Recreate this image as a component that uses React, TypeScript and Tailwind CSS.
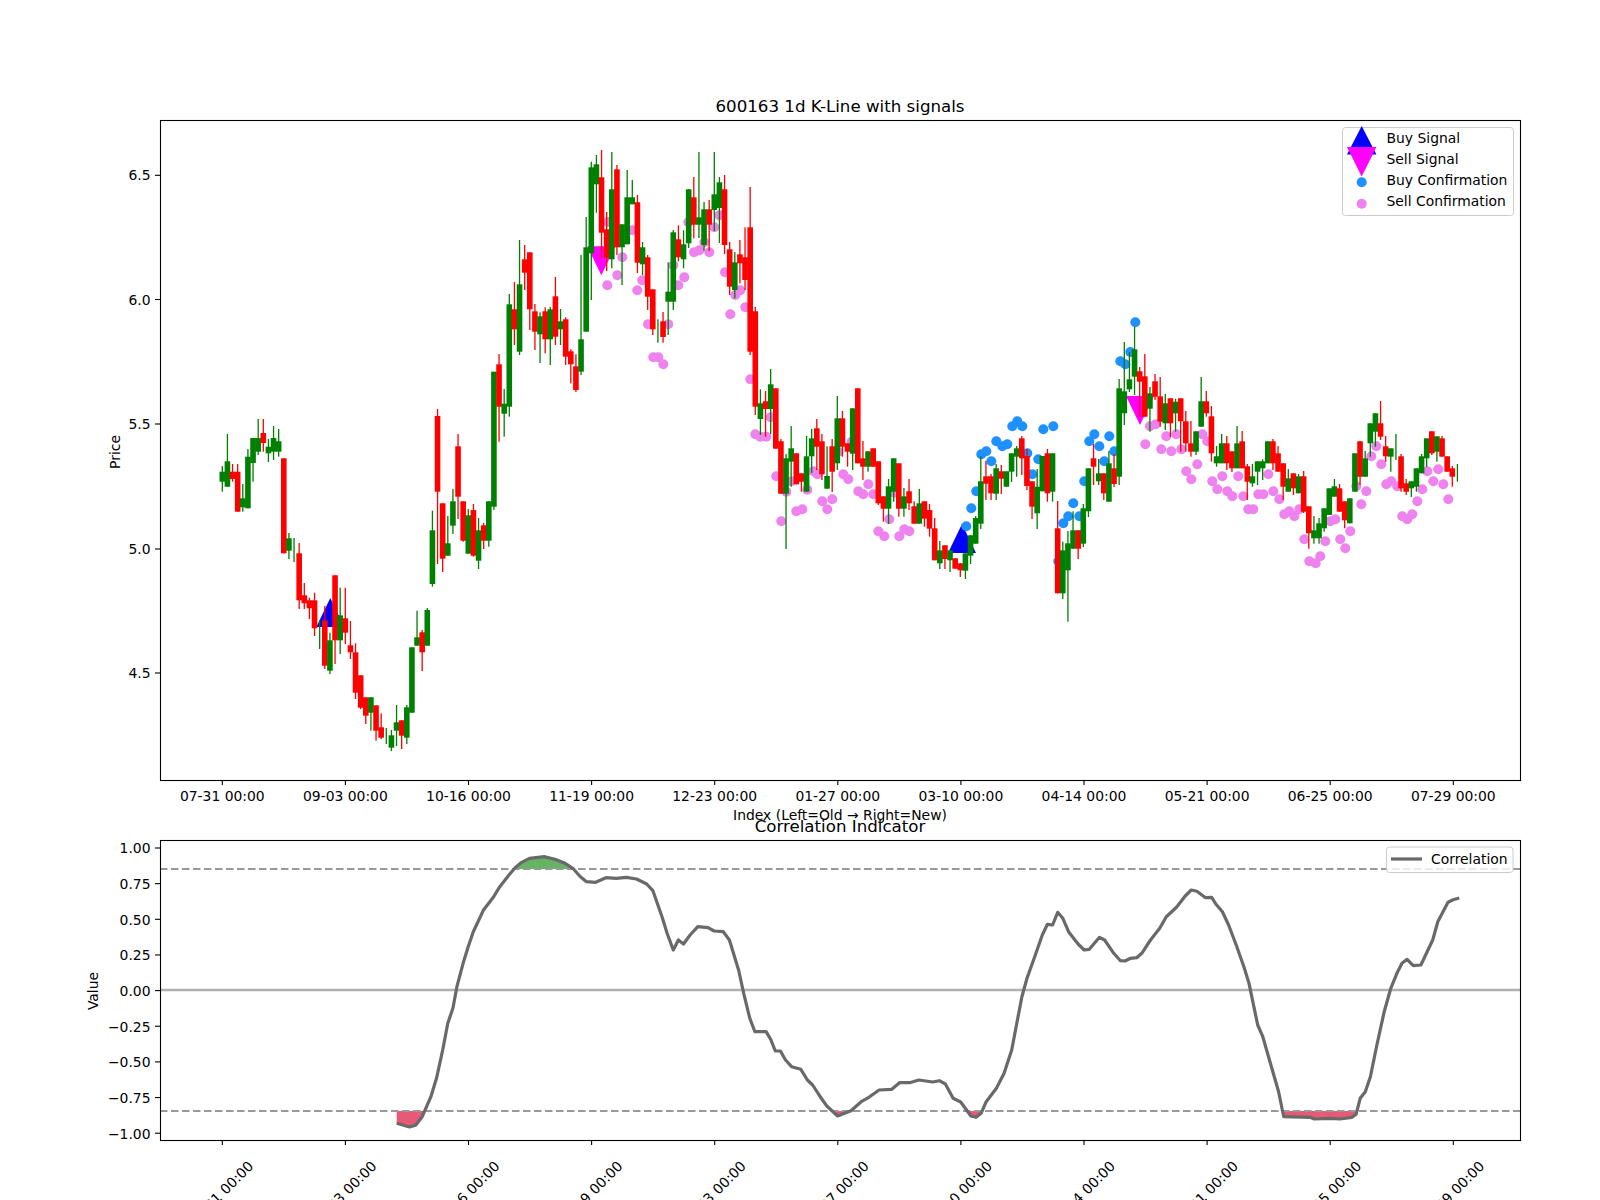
import React from "react";

type Candle = [string, number, number, number, number];
type Pt = [number, number];

// colour, body top, body bottom, wick top, wick bottom (pixels)
const candles: Candle[] = [
  ["g",471.7,481.7,466,491.7],["g",461.3,486.7,434,487],["r",471.7,479,464,481.7],["r",471.7,511.7,464,511.7],["g",498.3,507.3,484,511.7],
  ["g",456.7,508.3,449,508.3],["g",438,463,438,481.7],["g",438,451.7,419,455],["r",433,443,419,451.7],["g",446.7,453.3,439,462],
  ["g",438,451.7,426,460],["g",441.3,451.7,429,456.7],["r",458.3,553.3,458.3,553.3],["g",538.3,550.7,533,559],["g",550,550,538,562],
  ["r",553.3,600.3,543,609],["r",595.3,603.3,583,609],["r",600.3,608.3,597.7,619],["r",600.3,628.3,592.7,636],["g",630,630,620,649],
  ["r",620.3,665.7,606,669],["g",640.3,670.7,632.7,674],["r",575.3,640.3,575.3,664],["g",615.3,640.3,587.7,654],["r",618.3,632.7,587.7,644],
  ["r",645.3,652.3,621,659],["r",652.3,692.7,643.3,699],["r",675.3,707.7,675.3,709],["r",697.3,715.7,697.3,724],["g",697.3,712.7,697.3,730.7],
  ["r",705.3,730.7,705.3,740.7],["r",727.3,737.7,713.3,739],["g",736,736,728,744],["g",735.3,747.7,730,751],["g",722.3,730.7,705,746],
  ["r",720.3,735.7,720.3,749],["g",707.3,737.7,705,744],["g",647.3,712.7,647.3,712.7],["g",637.3,645.7,610.7,645.7],["r",632.3,652.3,630,671],
  ["g",610,645.7,608,645.7],["g",530.3,584,510.7,586.7],["r",416,491.7,409,564],["r",503.3,558.7,503.3,572],["g",543.3,555.7,516,555.7],
  ["g",501.3,525.7,489,534],["r",446.3,496.7,434,519],["r",501.3,540.7,501.3,541.7],["g",515.3,553.7,509,553.7],["r",510,555.7,504,556.7],
  ["g",530.3,560.7,518,569],["r",525.3,540.7,523,549],["g",501.3,540.7,501.3,546.7],["g",371.7,506.7,371.7,510],["r",364.3,406.7,354,441.7],
  ["g",403.7,413.7,389,436.7],["g",304.3,406.7,294,416.7],["r",309.3,329.3,282,345],["g",284.3,351.7,240,355],["r",259.3,272.7,245,290],
  ["r",252.3,309.3,252.3,330],["r",311.3,331.7,304,350],["g",316.3,334.3,312.3,363],["r",311.3,339.3,307.3,353.3],["g",309.3,339.3,307,365],
  ["r",296.3,336.7,277,345],["g",321.3,329.3,309,345],["r",319.3,356.7,317.3,365],["r",351.3,364.3,349.3,383.3],["r",366.3,390,354.3,392],
  ["g",339.3,371.7,255,375],["g",247.3,331.7,217,331.7],["g",167.3,253.3,161.7,300],["g",164.3,184.3,155,212.7],["r",177.3,232.7,150,258],
  ["r",229.3,257.7,212,271],["g",189.3,259.3,152,268.3],["r",169.3,247.3,165,255],["g",224.3,247.3,224.3,285],["g",197.3,244.3,170,244.3],
  ["g",197.3,204.3,180,204.3],["r",202.3,262.7,195,273],["g",247.3,264.3,242,275],["r",257.3,296.7,255,310],["r",289.3,329.3,289.3,335],
  ["g",330,330,319.3,342.7],["r",321.3,337,312,342.7],["g",291.7,301.7,262.3,335],["g",232.3,301.7,230,310],["r",239.3,257.3,225.3,261.3],
  ["g",244.3,259.3,230.3,268.3],["g",189.3,243.3,189.3,248],["r",197.3,224.7,177,238.3],["g",217.3,224.7,152,238],["g",209.3,245,202,250.7],
  ["r",209.3,224.7,200,251],["g",194.3,210,152,231],["g",182.3,208,177,243],["r",189.3,245,175,254],["r",249.3,286.7,242,295],
  ["g",262.3,290,252,298.3],["r",254.3,263.3,240,283.3],["r",257.3,280,227.3,290],["r",227.3,351.7,187,355],["r",311.3,406.7,307,415],
  ["g",403.3,419,389.3,435],["r",401.3,409,391,436.7],["g",384.3,409,369,434],["r",388.3,448.7,388.3,448.7],["r",441.3,493.7,439,493.7],
  ["g",458.3,493.7,454,549],["g",448.3,461.7,426,486.7],["r",453.3,484.3,453.3,484.3],["r",473.3,481.7,473.3,491.7],["g",456.3,491.7,436,491.7],
  ["g",438.3,456.3,429,473],["r",428.3,446.7,419,470],["r",441.3,474.3,434,480],["g",476,488.7,446.3,488.7],["r",446.3,471.7,439,492],
  ["g",418.3,463.3,396,470],["r",418.3,446.7,411,456.7],["r",443.3,451.7,443.3,466.7],["g",408.3,453.7,408.3,470],["r",388.3,463.3,388.3,463.3],
  ["r",458.3,466.7,441,480],["g",451.3,466.7,451.3,471.7],["r",448.3,466.7,448.3,466.7],["r",461.3,503.3,461.3,505],["r",496.3,508.7,496.3,521.7],
  ["g",486.3,508.7,479,524],["g",458.3,491.7,458.3,501.7],["r",463.3,508.7,463.3,516.7],["g",496.3,508.7,488,516.7],["r",491.3,503.3,479,510],
  ["r",506.3,523.7,501.3,523.7],["g",503.3,523.7,489,523.7],["r",501.3,518.7,501.3,526.7],["r",510,528.7,504,536.7],["r",528.3,560.3,518,560.3],
  ["g",550.3,563.3,541,569],["r",545.3,559,545.3,569],["g",550.3,560.3,550.3,572],["r",558.3,568.7,558.3,568.7],["r",563.3,570.3,563.3,577],
  ["g",553.3,570.7,553.3,579],["g",535.3,555.7,535.3,564],["g",518,543.7,516,543.7],["g",481.3,523.7,456,529],["r",476.3,483.7,461,500],
  ["r",476.3,493.3,474,500],["g",468.3,493.7,464,500],["r",471.3,478.7,465,494],["g",471.3,486.7,471.3,486.7],["g",453.3,471.7,453.3,482],
  ["g",448.3,456.7,446,476.7],["r",438.3,458.3,436,475],["r",456,486,449,490],["r",481.3,506.7,481.3,519],["g",486.7,513.3,469,529],
  ["g",456,491.3,456,491.3],["r",453.3,493.3,449,501.7],["g",453.3,491.7,453.3,501.7],["r",528.3,593.3,501,593.3],["g",550.3,593.3,541.7,599],
  ["g",543.3,570.3,531,621.7],["g",530.3,548.7,511.3,548.7],["r",530.3,548.7,530.3,559],["g",508.3,543.7,504,547],["g",468.3,511.3,468.3,517],
  ["r",458.3,466.7,444,485],["g",473.3,481.3,459,485],["r",473.3,493.3,473.3,500],["g",463.3,501.7,451,501.7],["r",468.3,484,454,487],
  ["g",388.3,476.7,379,485],["g",391.3,413.3,342,425],["g",379.3,389.3,352,392],["g",349.3,376.7,326.7,395],["r",371.3,381.7,367,416.7],
  ["r",376.3,416.7,354,416.7],["g",393.3,408.7,387,431.7],["r",381.3,396.7,374,400],["r",396.3,421.7,377,426.7],["g",403.3,423.3,394,430],
  ["r",398.3,423.3,398.3,437],["g",401.7,413.3,398.7,431.7],["r",398.3,421.3,398.3,451.7],["r",421.3,443.3,411,451.7],["r",443.3,451.7,421,456.7],
  ["g",431.3,451.7,431.3,455],["g",401.3,426.7,377,426.7],["r",401.3,413.3,391,416.7],["r",416.3,453.3,406,461.7],["g",456.3,463.3,446,466.7],
  ["g",443.3,463.3,434,463.3],["r",443.3,463.3,436,470],["r",451.3,468.3,451.3,472],["g",443.3,468.3,426,468.3],["r",441.3,468.3,431,468.3],
  ["r",466.3,481.7,464,500],["g",476.3,483.3,464,486.7],["g",461.3,471.7,461.3,485],["g",461.3,468.3,459.3,480],["g",441.3,463.3,441.3,463.3],
  ["r",441.3,463.3,439,470],["r",453.3,471.7,446,471.7],["r",463.3,486.7,463.3,500],["g",478.3,491.7,469,491.7],["r",473.3,488.3,473.3,495],
  ["g",476.3,493.3,474,493.3],["r",476.3,511.7,471,513],["r",506.3,533.3,506.3,548.7],["g",530.3,538.3,516,543.7],["g",523.3,538.3,518,543.7],
  ["g",508.3,528.3,508.3,531.7],["g",488.3,515,488.3,515],["g",486.3,496.7,479,496.7],["r",488.3,511.7,484,511.7],["r",501.3,520.3,501.3,528.3],
  ["g",498.3,523.3,498.3,523.3],["g",453.3,491.7,453.3,491.7],["r",441.3,476.7,441.3,485],["g",458.3,476.7,451,476.7],["g",423.3,443.3,423.3,456.7],
  ["g",413.3,431.7,413.3,446.7],["r",423.3,436.7,401,440],["r",446.3,456.3,436,461.7],["g",448.3,456.7,448.3,471.7],["g",447,447,434,460],
  ["r",456.3,488.3,454,491.7],["r",483.3,491.7,479,495],["g",481.3,488.3,481.3,497],["g",468.3,486.7,468.3,491.7],["g",456.3,473.3,454,473.3],
  ["g",438.3,458.3,438.3,467],["r",431.3,453.3,431.3,455],["g",436.3,451.7,436.3,461.7],["r",438.3,456.7,436,456.7],["r",456.3,471.7,456.3,471.7],
  ["r",468.3,476.7,466,486.7],["g",473,473,464,481.7],
];

const pinkDots: Pt[] = [
  [607.3,285.3],[617.3,275.3],[622.3,257.3],[637.3,290.3],[642.3,280.3],[632.3,230.3],[608,222],[648,324.3],[668.3,324.3],[653.3,357.3],
  [658.3,357.3],[663.3,364.3],[673.3,265.3],[678.3,285.3],[684.3,277.3],[688.3,222.3],[694,252.3],[699.3,250.3],[704.3,242.3],[709.3,252.3],
  [714.3,227.3],[719.3,215.3],[725,272.3],[730.3,314.3],[735.3,295],[740.3,290.3],[745.3,307.3],[750.3,379.3],[755.3,434.3],[760.3,436.7],
  [766.3,436.7],[770.7,417.3],[776.3,476.3],[781.3,521.3],[786.3,491.7],[791.3,481.3],[796.3,511.3],[802.3,509.3],[807.3,489.7],[813.3,471.3],
  [817.3,474.3],[822.3,501.3],[827.3,509.3],[832.3,499.3],[838.3,451.7],[843.3,474.3],[848.3,479.3],[851.7,441.7],[858.3,491.3],[863.3,494.3],
  [868.3,484.3],[873.3,494.3],[878.3,531.3],[884.3,536.3],[889.3,519.3],[894.3,492.7],[899.3,536.3],[904.3,529.3],[909.3,531.3],[1145.3,444.3],
  [1150,426.3],[1155.7,424.3],[1161.3,449.3],[1166.3,436.3],[1171.3,451.3],[1176.3,434.3],[1181.3,449.3],[1186.3,471.3],[1191.3,479.3],[1197.3,464.3],
  [1202.3,434.3],[1207.3,441.3],[1212.3,481.3],[1217.3,489.3],[1222.3,476.3],[1227.3,491.3],[1232.3,496.3],[1238.3,476.3],[1243.3,496.3],[1248.3,509.3],
  [1253.3,509.3],[1258.3,494.3],[1263.3,494.3],[1268.3,474.3],[1273.3,491.3],[1279.3,499.3],[1284.3,514.3],[1289.3,511.3],[1294.3,516.3],[1299.3,509.3],
  [1304.3,539.3],[1309.3,561.3],[1315.7,563.3],[1320.3,556.3],[1325.3,541.3],[1330.3,521.3],[1335.3,519.3],[1340.3,539.3],[1345.3,548.3],[1350.3,531.3],
  [1356.3,486.3],[1361.3,504.3],[1366.3,491.3],[1371.3,456.3],[1376.3,446.3],[1381.3,464.3],[1386.3,484.3],[1391.3,481.3],[1397.3,486.3],[1402.3,516.3],
  [1407.3,519.3],[1412.3,514.3],[1417.3,501.3],[1422.3,489.3],[1427.3,471.3],[1433.3,481.3],[1438.3,469.3],[1443.3,484.3],[1448.3,499.3],
];

const blueDots: Pt[] = [
  [966.3,526.3],[971.3,508.3],[976.3,491.3],[981.3,454.3],[986.3,451.3],[991.3,461.3],[996.3,441.3],[1002.3,446.3],[1007.3,444.3],[1012.3,426.3],
  [1017.3,421.3],[1022.3,426.3],[1027.3,453.3],[1032.3,474.3],[1038.3,459.3],[1043.3,429.3],[1053.3,426.3],[1058.3,561.3],[1063.3,523.3],[1068.3,516.3],
  [1073.3,503.3],[1079.3,516.3],[1084.3,481.3],[1089.3,441.3],[1094.3,434.3],[1099.3,446.3],[1104.3,461.3],[1109.3,436.3],[1114.3,451.3],[1120.3,361.3],
  [1125.3,364.3],[1130.3,352],[1135.3,322.3],
];

const corr: Pt[] = [
  [396.7,1123.3],[409.5,1127],[415.6,1125.3],[422.2,1116.7],[430.9,1096.7],[436.5,1078.3],[442.7,1050],[447.8,1023.3],[452.9,1008.3],[456.9,986.7],
  [463.1,963.3],[468.2,946.7],[473.3,931.7],[483.5,910],[493.7,896.7],[499.8,886.7],[509,875],[515.1,867.7],[521.7,862.3],[529.4,858.3],
  [544.7,856.7],[554.9,859.3],[565.1,863.3],[572.8,868.3],[580.4,876.7],[586.5,881.7],[595.7,882.3],[605.9,877.7],[616.1,878.3],[626.3,877.3],
  [636.5,879],[646.7,884],[652.9,890.7],[662,916.7],[667.1,933.3],[673.3,950],[678.4,940],[683.5,944],[690.1,935],[697.8,926.7],
  [708,927.7],[714.1,931],[723.3,931.7],[729.4,940],[738.6,970],[743.7,993.3],[749.8,1018.3],[754.9,1031.7],[766.1,1031.7],[770.7,1039.3],
  [775.3,1051],[780.4,1051],[785.5,1060],[791.6,1066.7],[800.8,1069.3],[807.4,1080],[812.6,1085],[820.2,1096.7],[826.8,1106],[837.6,1116],
  [851,1110.7],[861.2,1101.7],[868.9,1097.3],[879.1,1090],[891.8,1089.3],[899.5,1082.7],[909.7,1082.7],[918.9,1080],[932.7,1082],[939.3,1080.7],
  [945.4,1084],[953.1,1098.3],[960.7,1102],[970.9,1116],[976,1117.3],[981.1,1113.3],[986.2,1101.7],[996.4,1088.3],[1004.1,1073.3],[1011.7,1050],
  [1016.8,1023.3],[1021.9,996.7],[1027,978.3],[1034.7,956.7],[1042.3,935],[1047.4,924.3],[1052.6,925],[1057.7,912.3],[1062.8,918.3],[1068.9,932.3],
  [1078.1,944],[1084.2,950],[1089.3,949.3],[1099.5,937.3],[1104.6,940],[1113.8,953.3],[1120.4,960.7],[1125,961],[1130.6,958.3],[1136.7,957.7],
  [1141.8,953.3],[1150.5,940],[1159.7,928.3],[1166.3,916.7],[1176.5,907.3],[1185.2,896],[1191.3,890],[1196.9,891.3],[1205.6,897.7],[1211.7,897.3],
  [1215.8,904],[1222.4,911.7],[1228.6,925],[1236.2,945],[1243.9,966.7],[1249,983.3],[1257.7,1025],[1262.8,1036.7],[1270.4,1063.3],[1278.6,1091.7],
  [1283.7,1116.7],[1310.2,1117.3],[1314.3,1119],[1330.6,1118.3],[1339.8,1119],[1352,1117.3],[1356.1,1114.3],[1360.2,1098.3],[1365.3,1091.7],[1370.4,1076.7],
  [1376.5,1046.7],[1384.2,1011.7],[1390.8,988.3],[1396.9,973.3],[1402,963.3],[1407.1,959.3],[1413.3,965.7],[1420.9,965],[1432.7,940],[1437.8,921.7],
  [1448,902.3],[1453.1,899.7],[1459.2,898],
];

const dates = ["07-31 00:00","09-03 00:00","10-16 00:00","11-19 00:00","12-23 00:00","01-27 00:00","03-10 00:00","04-14 00:00","05-21 00:00","06-25 00:00","07-29 00:00"];
const tickX = (i: number) => 222.3 + 123.1 * i;
const priceTicks = [["6.5",175.3],["6.0",299.5],["5.5",424],["5.0",549],["4.5",673]] as const;
const corrTicks = ["1.00","0.75","0.50","0.25","0.00","−0.25","−0.50","−0.75","−1.00"];

const toPoints = (pts: Pt[]) => pts.map(([x, y]) => `${x},${y}`).join(" ");

// region between the curve and a threshold line, from x1 to x2
function area(x1: number, x2: number, y: number, keepBelow: boolean) {
  const inside = corr.filter(([x, v]) => x >= x1 && x <= x2 && (keepBelow ? v >= y : v <= y));
  return toPoints([[inside[0][0], y], ...inside, [inside[inside.length - 1][0], y]]);
}

function Triangle({ x, y, up, color }: { x: number; y: number; up: boolean; color: string }) {
  const d = up
    ? `${x},${y} ${x - 14},${y + 29} ${x + 14},${y + 29}`
    : `${x},${y} ${x - 14},${y - 29} ${x + 14},${y - 29}`;
  return <polygon points={d} fill={color} />;
}

function PriceChart() {
  return (
    <svg width={1600} height={830} viewBox="0 0 1600 830" className="block overflow-visible">
      <text x={840} y={112} textAnchor="middle" className="text-[16.67px]">600163 1d K-Line with signals</text>

      <Triangle x={330.3} y={598} up color="#0000ff" />
      <Triangle x={962} y={524} up color="#0000ff" />
      <Triangle x={601.3} y={275.3} up={false} color="#ff00ff" />
      <Triangle x={1140} y={425} up={false} color="#ff00ff" />

      {pinkDots.map(([x, y], i) => <circle key={i} cx={x} cy={y} r={5} fill="#ee82ee" />)}
      {blueDots.map(([x, y], i) => <circle key={i} cx={x} cy={y} r={5} fill="#1e90ff" />)}

      {candles.map(([c, top, bot, wickTop, wickBot], i) => {
        const x = 222.3 + 5.125 * i;
        const color = c === "g" ? "#008000" : "#ff0000";
        return (
          <g key={i} fill={color}>
            <rect x={x - 0.65} y={wickTop} width={1.3} height={wickBot - wickTop} />
            {bot > top && <rect x={x - 2.8} y={top} width={5.6} height={bot - top} />}
          </g>
        );
      })}

      <rect x={160.5} y={120.5} width={1360} height={660} fill="none" stroke="#000" strokeWidth={1.1} />

      {dates.map((d, i) => (
        <g key={d}>
          <line x1={tickX(i)} x2={tickX(i)} y1={780} y2={785} stroke="#000" strokeWidth={1.1} />
          <text x={tickX(i)} y={801} textAnchor="middle" className="text-[13.9px]">{d}</text>
        </g>
      ))}
      {priceTicks.map(([label, y]) => (
        <g key={label}>
          <line x1={155} x2={160} y1={y} y2={y} stroke="#000" strokeWidth={1.1} />
          <text x={150.5} y={y + 5} textAnchor="end" className="text-[13.9px]">{label}</text>
        </g>
      ))}
      <text transform="translate(120 452) rotate(-90)" textAnchor="middle" className="text-[13.9px]">Price</text>
      <text x={840} y={820} textAnchor="middle" className="text-[13.9px]">Index (Left=Old → Right=New)</text>

      <rect x={1342.5} y={127.5} width={171} height={88} rx={3} fill="#ffffff" fillOpacity={0.8} stroke="#cccccc" />
      <polygon points="1361.7,126 1347,154.5 1376.4,154.5" fill="#0000ff" />
      <polygon points="1361.7,176.5 1347,147 1376.4,147" fill="#ff00ff" />
      <circle cx={1361.7} cy={182.3} r={5} fill="#1e90ff" />
      <circle cx={1361.7} cy={203.7} r={5} fill="#ee82ee" />
      <text x={1386.5} y={143} className="text-[13.9px]">Buy Signal</text>
      <text x={1386.5} y={164} className="text-[13.9px]">Sell Signal</text>
      <text x={1386.5} y={185} className="text-[13.9px]">Buy Confirmation</text>
      <text x={1386.5} y={206} className="text-[13.9px]">Sell Confirmation</text>
    </svg>
  );
}

function CorrelationChart() {
  return (
    <svg width={1600} height={370} viewBox="0 830 1600 370" className="block overflow-visible">
      <text x={840} y={832} textAnchor="middle" className="text-[16.67px]">Correlation Indicator</text>

      <line x1={160} x2={1520} y1={990} y2={990} stroke="#b0b0b0" strokeWidth={2.4} />

      <polygon points={area(510, 575, 869, false)} fill="#008000" fillOpacity={0.6} />
      <polygon points="396.7,1111 396.7,1123.3 409.5,1127 415.6,1125.3 422.2,1116.7 424.5,1111" fill="#dc143c" fillOpacity={0.7} />
      <polygon points="831,1111 837.6,1116 851,1111" fill="#dc143c" fillOpacity={0.7} />
      <polygon points="968.5,1111 970.9,1116 976,1117.3 981.1,1113.3 982.3,1111" fill="#dc143c" fillOpacity={0.7} />
      <polygon points={area(1283, 1357, 1111, true)} fill="#dc143c" fillOpacity={0.7} />

      <line x1={160} x2={1520} y1={869} y2={869} stroke="#999999" strokeWidth={2.2} strokeDasharray="7.5 3.5" />
      <line x1={160} x2={1520} y1={1111} y2={1111} stroke="#999999" strokeWidth={2.2} strokeDasharray="7.5 3.5" />

      <polyline points={toPoints(corr)} fill="none" stroke="#696969" strokeWidth={3.2} strokeLinejoin="round" />

      <rect x={160.5} y={840.5} width={1360} height={300} fill="none" stroke="#000" strokeWidth={1.1} />

      {dates.map((d, i) => (
        <g key={d}>
          <line x1={tickX(i)} x2={tickX(i)} y1={1140} y2={1145} stroke="#000" strokeWidth={1.1} />
          <text
            transform={`translate(${tickX(i) - 1.5} 1193.5) rotate(-45)`}
            textAnchor="middle"
            dominantBaseline="central"
            className="text-[13.9px]"
          >
            {d}
          </text>
        </g>
      ))}
      {corrTicks.map((label, i) => {
        const y = 848 + 35.65 * i;
        return (
          <g key={label}>
            <line x1={155} x2={160} y1={y} y2={y} stroke="#000" strokeWidth={1.1} />
            <text x={150.5} y={y + 5.3} textAnchor="end" className="text-[13.9px]">{label}</text>
          </g>
        );
      })}
      <text transform="translate(98 991) rotate(-90)" textAnchor="middle" className="text-[13.9px]">Value</text>

      <rect x={1386.5} y={847} width={126.5} height={25.5} rx={3} fill="#ffffff" fillOpacity={0.8} stroke="#cccccc" />
      <line x1={1391} x2={1422} y1={859} y2={859} stroke="#696969" strokeWidth={3.2} />
      <text x={1431} y={863.5} className="text-[13.9px]">Correlation</text>
    </svg>
  );
}

export default function App() {
  return (
    <div className="w-[1600px] h-[1200px] overflow-hidden bg-white text-black font-['DejaVu_Sans',sans-serif]">
      <PriceChart />
      <CorrelationChart />
    </div>
  );
}
